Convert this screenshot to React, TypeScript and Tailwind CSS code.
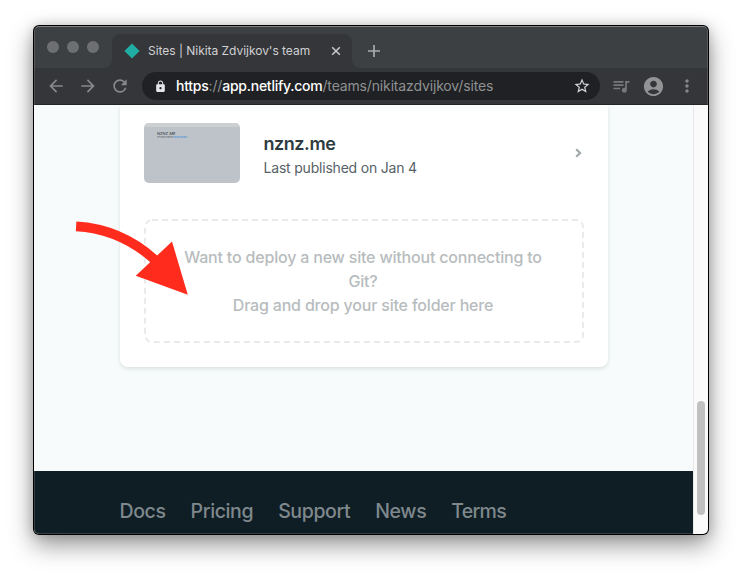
import React from "react";
import {
  MdArrowBack,
  MdArrowForward,
  MdRefresh,
  MdLock,
  MdStarBorder,
  MdQueueMusic,
  MdAccountCircle,
  MdMoreVert,
} from "react-icons/md";

function TabStrip() {
  return (
    <div className="flex h-[42px] shrink-0 bg-[#3c4043] pt-2">
      <div className="flex w-[70px] gap-2 pt-[7px] pl-[13px]">
        <i className="size-3 rounded-full bg-[#6e6f72]" />
        <i className="size-3 rounded-full bg-[#6e6f72]" />
        <i className="size-3 rounded-full bg-[#6e6f72]" />
      </div>
      <div className="flex w-2 items-end bg-[#35363a]">
        <div className="h-full w-2 rounded-br-lg bg-[#3c4043]" />
      </div>
      <div className="w-[240px] bg-[#3c4043]">
        <div className="flex h-full items-center rounded-t-lg bg-[#35363a] pl-3">
          <svg className="size-4 shrink-0" viewBox="0 0 16 16">
            <path d="M8 .4 15.6 8 8 15.6.4 8Z" fill="#20aea4" />
          </svg>
          <span className="ml-2 w-[180px] text-[12px] leading-4 tracking-[-0.03px] whitespace-nowrap text-[#d0d1d3]">
            Sites | Nikita Zdvijkov's team
          </span>
          <svg className="ml-[3px] size-[10px]" viewBox="0 0 10 10">
            <path d="M1.2 1.2 8.8 8.8M8.8 1.2 1.2 8.8" stroke="#c9cacc" strokeWidth="1.5" />
          </svg>
        </div>
      </div>
      <div className="w-2 bg-[#35363a]">
        <div className="h-full w-2 rounded-bl-lg bg-[#3c4043]" />
      </div>
      <svg className="mt-[11px] ml-2 size-3" viewBox="0 0 12 12">
        <path d="M6 0V12M0 6H12" stroke="#a9abad" strokeWidth="1.7" />
      </svg>
    </div>
  );
}

function Toolbar() {
  return (
    <div className="flex h-[37px] shrink-0 items-center border-b border-[#252427] bg-[#35363a] text-[#87888a]">
      <MdArrowBack className="ml-3 size-5" />
      <MdArrowForward className="ml-3 size-5" />
      <MdRefresh className="ml-3 size-5" />
      <div className="ml-3 flex h-7 w-[458px] items-center rounded-full bg-[#202124] pl-3 text-[14px]">
        <MdLock className="size-[13px] text-[#e4e5e6]" />
        <span className="ml-[9px] grow pb-px tracking-[-0.15px] whitespace-nowrap text-[#8f9193]">
          <span className="font-medium tracking-[-0.25px] text-white">https</span>://
          <span className="font-medium tracking-[-0.25px] text-white">app.netlify.com</span>/teams/nikitazdvijkov/sites
        </span>
        <MdStarBorder className="mr-[9px] size-[18px] text-[#d4d5d6]" />
      </div>
      <MdQueueMusic className="ml-[11px] size-5 text-[#77787b]" />
      <MdAccountCircle className="ml-[11px] size-[23px] text-[#929395]" />
      <MdMoreVert className="ml-3 size-5" />
    </div>
  );
}

function SiteCard() {
  return (
    <div className="ml-[86px] h-[262px] w-[488px] rounded-b-lg bg-white shadow-[0_2px_4px_rgba(14,30,37,0.12)]">
      <div className="h-[6px] bg-[#fbfcfc]" />
      <div className="flex h-[84px] pt-3 pl-6">
        <div className="h-[60px] w-24 overflow-hidden rounded-[5px] bg-[#bdc3c8]">
          <div className="h-1 bg-[#cdd0d0]" />
          <div className="pt-[5px] pl-[13px]">
            <div className="text-[4px] leading-[4px] font-medium text-[#4a5054]">NZNZ.ME</div>
            <div className="w-[32px] overflow-hidden text-[2px] leading-[3px] whitespace-nowrap text-[#596068]">
              Personal website <span className="text-[#2684dc]">nikita zdvijkov</span>
            </div>
          </div>
        </div>
        <div className="ml-[23.5px] pt-[9px]">
          <div className="text-[18px] leading-6 font-semibold tracking-[-0.45px] text-[#2d3b41]">nznz.me</div>
          <div className="text-[14px] leading-6 tracking-[-0.2px] text-[#566267]">Last published on Jan 4</div>
        </div>
        <svg className="mt-[25px] mr-[26px] ml-auto h-[10px] w-[7px]" viewBox="0 0 7 10">
          <path d="M1.2 1.3 5 5 1.2 8.7" fill="none" stroke="#a3a9ac" strokeWidth="2.3" />
        </svg>
      </div>
      <div className="mx-6 mt-6 h-[124px]">
        <div className="relative h-full">
          <svg className="absolute inset-0 h-full w-full" viewBox="0 0 440 124">
            <rect x="1" y="1" width="438" height="122" rx="7" fill="none" stroke="#e9ebeb" strokeWidth="2" strokeDasharray="6 4" />
          </svg>
          <div className="pt-[26px] pr-[25px] pl-[23px] text-center text-[16px] leading-6 font-medium tracking-[-0.19px] text-[#b7bcbe]">
            <p className="whitespace-nowrap">
              Want to deploy a new site without connecting to
              <br />
              Git?
            </p>
            <p>Drag and drop your site folder here</p>
          </div>
        </div>
      </div>
    </div>
  );
}

function Footer() {
  return (
    <div className="flex h-[63px] shrink-0 gap-[25px] bg-[#0f1e25] pt-[28px] pl-[85.5px] text-[19.5px] leading-6 font-medium tracking-[-0.38px] text-[#7f888c]">
      <span>Docs</span>
      <span>Pricing</span>
      <span>Support</span>
      <span>News</span>
      <span className="tracking-[-0.7px]">Terms</span>
    </div>
  );
}

export default function App() {
  return (
    <div className="relative h-[576px] w-[742px] overflow-hidden bg-white pt-[25px] pl-[33px] font-['Inter','Liberation_Sans',sans-serif]">
      <div className="h-[510px] w-[676px] rounded-[6px] bg-black p-px shadow-[0_10px_24px_rgba(0,0,0,0.42),0_0_12px_rgba(0,0,0,0.16)]">
        <div className="relative flex h-full flex-col overflow-hidden rounded-[5px]">
          <TabStrip />
          <Toolbar />
          <div className="flex grow">
            <div className="flex w-[659px] flex-col bg-[#f7fbfc]">
              <SiteCard />
              <div className="grow" />
              <Footer />
            </div>
            <div className="w-[15px] border-l border-[#e8e8e8] bg-[#fafafa] pt-[296px] pl-[3px]">
              <div className="h-[114px] w-2 rounded-full bg-[#c1c1c1]" />
            </div>
          </div>
          <div className="pointer-events-none absolute inset-0 rounded-[5px] border border-white/15 border-t-white/35" />
        </div>
      </div>
      <svg className="absolute top-[215px] left-[70px] h-[85px] w-[125px]" viewBox="70 215 125 85">
        <path d="M76.1 226.4Q121 229 155 260" fill="none" stroke="#ff2b1c" strokeWidth="9.6" />
        <path d="M172 241.5 187.8 294.8 135.8 275.7Z" fill="#ff2b1c" />
      </svg>
    </div>
  );
}
